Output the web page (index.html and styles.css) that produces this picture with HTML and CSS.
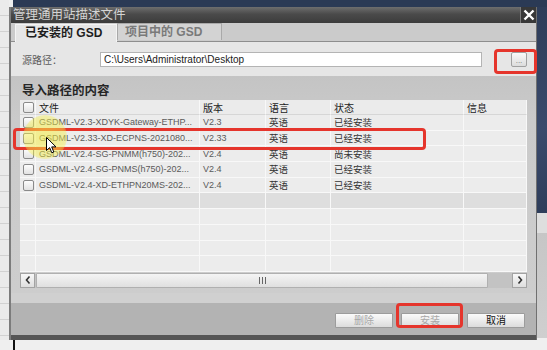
FILE: index.html
```html
<!DOCTYPE html>
<html lang="zh-CN">
<head>
  <meta charset="UTF-8" />
  <title>管理通用站描述文件</title>
  <link rel="stylesheet" href="styles.css">
</head>
<body>
  <div class="screen">
    <div class="dialog">
      <div class="titlebar">
        <span class="title">管理通用站描述文件</span>
        <span class="close">
          <svg width="12" height="12" viewBox="0 0 12 12"><path d="M1.5 1.5 L10.5 10.5 M10.5 1.5 L1.5 10.5" stroke="#fff" stroke-width="2.4" fill="none"/></svg>
        </span>
      </div>

      <div class="tabs">
        <div class="tab active">已安装的 GSD</div>
        <div class="tab">项目中的 GSD</div>
      </div>

      <div class="source">
        <label class="src-label" for="path">源路径：</label>
        <input class="path" id="path" type="text" value="C:\Users\Administrator\Desktop">
        <button class="browse">...</button>
      </div>

      <div class="section">
        <div class="section-title">导入路径的内容</div>
        <div class="grid">
          <div class="cell head"><span class="check"></span></div>
          <div class="cell head">文件</div>
          <div class="cell head">版本</div>
          <div class="cell head">语言</div>
          <div class="cell head">状态</div>
          <div class="cell head">信息</div>

          <div class="cell"><span class="check"></span></div>
          <div class="cell name">GSDML-V2.3-XDYK-Gateway-ETHP...</div>
          <div class="cell ver">V2.3</div>
          <div class="cell">英语</div>
          <div class="cell">已经安装</div>
          <div class="cell"></div>

          <div class="cell"><span class="check"></span></div>
          <div class="cell name">GSDML-V2.33-XD-ECPNS-2021080...</div>
          <div class="cell ver">V2.33</div>
          <div class="cell">英语</div>
          <div class="cell">已经安装</div>
          <div class="cell"></div>

          <div class="cell"><span class="check"></span></div>
          <div class="cell name">GSDML-V2.4-SG-PNMM(h750)-202...</div>
          <div class="cell ver">V2.4</div>
          <div class="cell">英语</div>
          <div class="cell">尚未安装</div>
          <div class="cell"></div>

          <div class="cell"><span class="check"></span></div>
          <div class="cell name">GSDML-V2.4-SG-PNMS(h750)-202...</div>
          <div class="cell ver">V2.4</div>
          <div class="cell">英语</div>
          <div class="cell">已经安装</div>
          <div class="cell"></div>

          <div class="cell"><span class="check"></span></div>
          <div class="cell name">GSDML-V2.4-XD-ETHPN20MS-202...</div>
          <div class="cell ver">V2.4</div>
          <div class="cell">英语</div>
          <div class="cell">已经安装</div>
          <div class="cell"></div>

          <div class="cell"></div>
          <div class="cell dim"></div><div class="cell dim"></div><div class="cell dim"></div><div class="cell dim"></div><div class="cell dim"></div>

          <div class="cell"></div><div class="cell"></div><div class="cell"></div><div class="cell"></div><div class="cell"></div><div class="cell"></div>
          <div class="cell"></div><div class="cell"></div><div class="cell"></div><div class="cell"></div><div class="cell"></div><div class="cell"></div>
          <div class="cell"></div><div class="cell"></div><div class="cell"></div><div class="cell"></div><div class="cell"></div><div class="cell"></div>
          <div class="cell"></div><div class="cell"></div><div class="cell"></div><div class="cell"></div><div class="cell"></div><div class="cell"></div>
        </div>

        <div class="hscroll">
          <span class="arrow">
            <svg width="8" height="10" viewBox="0 0 8 10"><path d="M5.5 1.5 L2.5 5 L5.5 8.5" stroke="#333" stroke-width="1.6" fill="none"/></svg>
          </span>
          <span class="thumb"><span class="grip"></span></span>
          <span class="track"></span>
          <span class="arrow">
            <svg width="8" height="10" viewBox="0 0 8 10"><path d="M2.5 1.5 L5.5 5 L2.5 8.5" stroke="#333" stroke-width="1.6" fill="none"/></svg>
          </span>
        </div>
      </div>

      <div class="actions">
        <button class="btn" disabled>删除</button>
        <button class="btn" disabled>安装</button>
        <button class="btn">取消</button>
      </div>
    </div>

    <div class="mark mark-browse"></div>
    <div class="mark mark-row"></div>
    <div class="mark mark-install"></div>
    <div class="spot"></div>
    <svg class="cursor" width="11" height="17" viewBox="0 0 11 17">
      <path d="M0.5 0.5 L0.5 13.5 L3.6 10.6 L5.8 15.8 L7.8 15 L5.7 9.9 L10 9.9 Z" fill="#fff" stroke="#000" stroke-width="1"/>
    </svg>
  </div>
</body>
</html>
```

FILE: styles.css
```css
* {
  box-sizing: border-box;
}

body {
  margin: 0;
  font-family: "Liberation Sans", "Noto Sans CJK SC", sans-serif;
  background: #efefef;
}

.screen {
  position: relative;
  width: 547px;
  height: 350px;
  overflow: hidden;
  padding: 7px 10px 10px 9px;
  background:
    linear-gradient(#111, #111) 13px 340px / 2px 10px no-repeat,
    linear-gradient(#2b3a55, #2b3a55) 13px 0 / 534px 7px no-repeat,
    linear-gradient(160deg, #2d3c58, #3a4a6c 60%, #2e3d5a) 537px 0 / 10px 213px no-repeat,
    linear-gradient(#dedede, #dedede) 537px 213px / 10px 20px no-repeat,
    linear-gradient(#c6c6c6, #cfcfcf) 537px 233px / 10px 105px no-repeat,
    repeating-linear-gradient(#ebebeb 0 15px, #d2d2d2 15px 16px) 0 0 / 9px 340px no-repeat,
    #efefef;
}

.dialog {
  width: 528px;
  height: 333px;
  display: flex;
  flex-direction: column;
  border-left: 2px solid #7c7c7c;
  border-right: 1px solid #707070;
  background: #c8c8c8;
}

/* title bar */
.titlebar {
  height: 16px;
  display: flex;
  align-items: center;
  background: linear-gradient(#6e6e6e, #4a4a4a 45%, #3c3c3c);
}

.title {
  flex: 1;
  padding-left: 2px;
  font-size: 12.5px;
  color: #d4d4d4;
  line-height: 16px;
}

.close {
  width: 16px;
  height: 16px;
  display: flex;
  align-items: center;
  justify-content: center;
  background: #383838;
  border-left: 1px solid #7a7a7a;
}

/* tabs */
.tabs {
  height: 18px;
  display: flex;
  align-items: flex-end;
  padding-left: 4px;
  background: #cbcbcb;
}

.tab {
  height: 17px;
  width: 105px;
  padding-left: 7px;
  font-size: 12px;
  font-weight: bold;
  line-height: 16px;
  color: #7a7a7a;
  background: #d3d3d3;
  border: 1px solid #a9a9a9;
  border-bottom: none;
  margin-bottom: 1px;
}

.tab.active {
  width: 102px;
  height: 18px;
  margin-bottom: -1px;
  padding-left: 9px;
  color: #1e1e1e;
  background: #e6e6e6;
  border-color: #f4f4f4;
  position: relative;
}

/* source path */
.source {
  height: 35px;
  display: flex;
  align-items: center;
  padding-left: 11px;
  background: #e6e6e6;
  border-top: 1px solid #8e8e8e;
}

.src-label {
  width: 78px;
  font-size: 10px;
  color: #5c5c5c;
}

.path {
  width: 382px;
  height: 15px;
  margin: 0;
  padding: 0 3px;
  font-family: inherit;
  font-size: 10px;
  color: #222;
  background: #fff;
  border: 1px solid #b4b4b4;
  outline: none;
}

.browse {
  width: 16px;
  height: 15px;
  margin: 1px 0 0 29px;
  padding: 0;
  font-family: inherit;
  font-size: 8px;
  line-height: 15px;
  color: #777;
  background: linear-gradient(#fafafa, #dcdcdc);
  border: 1px solid #a0a0a0;
  border-radius: 2px;
}

/* content list */
.section {
  flex: 1;
  display: flex;
  flex-direction: column;
  padding: 0 9px 0 9px;
  background: linear-gradient(#c4c4c4, #cacaca 20%, #cdcdcd);
}

.section-title {
  height: 24px;
  padding: 4px 0 0 2px;
  font-size: 12.5px;
  font-weight: bold;
  color: #262626;
}

.grid {
  display: grid;
  grid-template-columns: 16px 164px 66px 65px 133px 63px;
  grid-template-rows: 15px;
  grid-auto-rows: 15.7px;
  background: #ececec;
}

.cell {
  display: flex;
  align-items: center;
  padding-left: 3px;
  font-size: 9.5px;
  color: #333;
  white-space: nowrap;
  overflow: hidden;
  border-right: 1px solid #f8f8f8;
  border-bottom: 1px solid #f8f8f8;
}

.cell.head {
  color: #1c1c1c;
  font-size: 10px;
  background: #ebebeb;
  border-bottom-color: #d6d6d6;
}

.cell.name,
.cell.ver {
  font-size: 9px;
  color: #5a5a5a;
}

.cell.dim {
  background: #dedede;
}

.check {
  width: 11px;
  height: 11px;
  border: 1px solid #8a8a8a;
  border-radius: 2px;
  background: linear-gradient(#fdfdfd, #e2e2e2);
}

/* horizontal scrollbar */
.hscroll {
  height: 15px;
  margin-top: 1px;
  display: flex;
  background: #c3c3c3;
}

.arrow {
  width: 15px;
  height: 15px;
  display: flex;
  align-items: center;
  justify-content: center;
  background: linear-gradient(#f8f8f8, #dedede);
  border: 1px solid #a3a3a3;
}

.thumb {
  width: 452px;
  margin-left: 1px;
  display: flex;
  align-items: center;
  justify-content: center;
  background: linear-gradient(#f4f4f4, #e0e0e0);
  border: 1px solid #b0b0b0;
  border-radius: 1px;
}

.grip {
  width: 7px;
  height: 7px;
  background: repeating-linear-gradient(90deg, #666 0 1px, transparent 1px 3px);
}

.track {
  flex: 1;
}

/* bottom buttons */
.actions {
  height: 47px;
  display: flex;
  justify-content: flex-end;
  gap: 8px;
  padding: 10px 11px 0 0;
  background: #b3b3b3;
  border-top: 10px solid #d0d0d0;
  border-bottom: 5px solid #555;
}

.btn {
  width: 58px;
  height: 15px;
  padding: 0;
  font-family: inherit;
  font-size: 10px;
  line-height: 13px;
  color: #111;
  background: linear-gradient(#fbfbfb, #dcdcdc);
  border: 1px solid #9c9c9c;
  border-radius: 1px;
}

.btn:disabled {
  color: #a8a8a8;
}

/* overlays */
.mark {
  position: absolute;
  border: 3px solid #e5352c;
  border-radius: 4px;
}

.mark-browse {
  left: 494px;
  top: 49px;
  width: 43px;
  height: 25px;
}

.mark-row {
  left: 13px;
  top: 128px;
  width: 413px;
  height: 22px;
}

.mark-install {
  left: 396px;
  top: 303px;
  width: 67px;
  height: 25px;
}

.spot {
  position: absolute;
  left: 23px;
  top: 115px;
  width: 44px;
  height: 44px;
  border-radius: 50%;
  background: radial-gradient(rgba(245, 238, 70, 0.6), rgba(245, 238, 70, 0.45) 62%, rgba(245, 238, 70, 0) 100%);
}

.cursor {
  position: absolute;
  left: 46px;
  top: 137px;
}
```
